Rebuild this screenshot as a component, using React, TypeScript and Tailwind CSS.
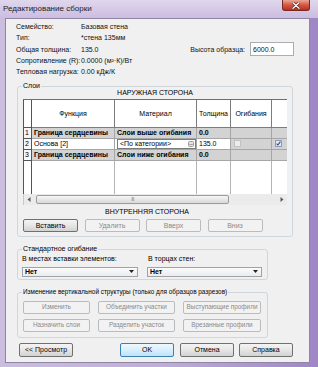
import React from "react";

const btnBase =
  "h-full flex items-center justify-center rounded-[2px] border whitespace-nowrap";
const btnNormal =
  "border-[#707070] bg-gradient-to-b from-[#f4f4f4] via-[#e6e6e6] to-[#d2d2d2] text-black";
const btnDisabled = "border-[#b8bcbf] bg-[#f2f2f2] text-[#8a8a8a]";
const btnDefault =
  "border-[#3c7fb1] bg-gradient-to-b from-[#eef8fe] via-[#d8effc] to-[#bde3f8] text-black";

function GroupBox({
  label,
  labelClass,
  className,
  children,
}: {
  label: string;
  labelClass?: string;
  className: string;
  children: React.ReactNode;
}) {
  return (
    <div className={"relative rounded-[3px] border border-[#d0d7dc] " + className}>
      <span
        className={
          "absolute left-[4px] top-[-5px] bg-[#f0f0f0] px-[1px] leading-[8px] text-black whitespace-nowrap " +
          (labelClass ?? "text-[7px]")
        }
      >
        {label}
      </span>
      {children}
    </div>
  );
}

function Arrow({ dir }: { dir: "l" | "r" }) {
  return (
    <div className="w-[10px] h-full flex items-center justify-center">
      <svg width="4" height="5" viewBox="0 0 4 5">
        {dir === "l" ? (
          <polygon points="3.5,0 3.5,5 0.5,2.5" fill="#5a5a5a" />
        ) : (
          <polygon points="0.5,0 0.5,5 3.5,2.5" fill="#5a5a5a" />
        )}
      </svg>
    </div>
  );
}

const cIdx = "w-[9px] shrink-0 border-l border-r border-b border-[#555] bg-[#f7f7f7] pl-[1px] flex items-center";
const cFunc = "w-[83px] shrink-0 border-r border-b border-[#a6a6a6] pl-[2px] flex items-center whitespace-nowrap";
const cMat = "w-[82px] shrink-0 border-r border-b border-[#a6a6a6] pl-[2px] flex items-center whitespace-nowrap";
const cThk = "w-[34px] shrink-0 border-r border-b border-[#a6a6a6] pl-[2px] flex items-center whitespace-nowrap";
const cOgb = "w-[41px] shrink-0 border-r border-b border-[#a6a6a6] flex items-center";
const cLast = "w-[15px] shrink-0 border-b border-[#a6a6a6] flex items-center";

export default function App() {
  return (
    <div className="w-[318px] h-[367px] overflow-hidden flex flex-col bg-gradient-to-r from-[#cbbde0] via-[#bfaed9] to-[#9f87c6] font-['Liberation_Sans',sans-serif] text-[7px] leading-none text-black">
      {/* Title bar */}
      <div className="h-[18px] shrink-0 flex items-start bg-gradient-to-b from-[#e0d7ec] to-[#cbbde0]">
        <span className="ml-[3px] mt-[5px] text-[8px] text-[#1c1c1c] whitespace-nowrap">
          Редактирование сборки
        </span>
        <div className="ml-auto mr-[8px] w-[28px] h-[11px] rounded-b-[3px] border border-t-0 border-[#7a2a22] bg-gradient-to-b from-[#eaa596] via-[#d45643] to-[#b8301f] flex items-center justify-center">
          <svg width="8" height="7" viewBox="0 0 8 7">
            <path d="M1 0.8 L7 6.2 M7 0.8 L1 6.2" stroke="#5a1a14" strokeWidth="2.6" strokeLinecap="round" />
            <path d="M1 0.8 L7 6.2 M7 0.8 L1 6.2" stroke="#ffffff" strokeWidth="1.4" strokeLinecap="round" />
          </svg>
        </div>
      </div>

      {/* Client */}
      <div className="ml-[5px] mr-[8px] mb-[4px] flex-1 flex flex-col border border-[#8e86a2] bg-[#f0f0f0]">
        {/* Info */}
        <div className="pt-[2px] pl-[10px] pr-[15px] flex flex-col text-[#111]">
          <div className="h-[11.3px] flex items-center">
            <span className="w-[65px] shrink-0 whitespace-nowrap">Семейство:</span>
            <span>Базовая стена</span>
          </div>
          <div className="h-[11.3px] flex items-center">
            <span className="w-[65px] shrink-0 whitespace-nowrap">Тип:</span>
            <span>*стена 135мм</span>
          </div>
          <div className="h-[11.3px] flex items-center">
            <span className="w-[65px] shrink-0 whitespace-nowrap">Общая толщина:</span>
            <span>135.0</span>
            <span className="ml-auto mr-[5px] whitespace-nowrap">Высота образца:</span>
            <div className="w-[44px] h-[14px] shrink-0 border border-[#abadb3] bg-white flex items-center pl-[2px]">
              6000.0
            </div>
          </div>
          <div className="h-[11.3px] flex items-center">
            <span className="w-[65px] shrink-0 whitespace-nowrap">Сопротивление (R):</span>
            <span className="whitespace-nowrap">0.0000 (м²·К)/Вт</span>
          </div>
          <div className="h-[11.3px] flex items-center">
            <span className="w-[65px] shrink-0 whitespace-nowrap">Тепловая нагрузка:</span>
            <span className="whitespace-nowrap">0.00 кДж/К</span>
          </div>
        </div>

        {/* Layers group */}
        <GroupBox label="Слои" className="ml-[11px] mt-[8.5px] w-[276px] h-[151px] flex flex-col">
          <div className="h-[12px] flex items-center justify-center">НАРУЖНАЯ СТОРОНА</div>
          <div className="ml-[5px] w-[264px] flex flex-col bg-white">
            {/* header */}
            <div className="h-[29px] flex border-t border-[#6f6f6f]">
              <div className="w-[9px] shrink-0 border-l border-r border-b border-[#555] bg-white" />
              <div className="w-[83px] shrink-0 border-r border-b border-[#7c7c7c] flex items-center justify-center">Функция</div>
              <div className="w-[82px] shrink-0 border-r border-b border-[#7c7c7c] flex items-center justify-center">Материал</div>
              <div className="w-[34px] shrink-0 border-r border-b border-[#7c7c7c] flex items-center justify-center whitespace-nowrap">Толщина</div>
              <div className="w-[41px] shrink-0 border-r border-b border-[#7c7c7c] flex items-center justify-center">Огибания</div>
              <div className="w-[15px] shrink-0 border-b border-[#7c7c7c]" />
            </div>
            {/* row 1 */}
            <div className="h-[11px] flex font-bold">
              <div className={cIdx + " font-normal"}>1</div>
              <div className={cFunc + " bg-[#d3d3d3]"}>Граница сердцевины</div>
              <div className={cMat + " bg-[#d3d3d3]"}>Слои выше огибания</div>
              <div className={cThk + " bg-[#d3d3d3]"}>0.0</div>
              <div className={cOgb + " bg-[#d3d3d3]"} />
              <div className={cLast + " bg-[#d3d3d3]"} />
            </div>
            {/* row 2 */}
            <div className="h-[11px] flex">
              <div className={cIdx}>2</div>
              <div className={cFunc + " bg-white"}>Основа [2]</div>
              <div className={cMat + " bg-white pl-0"}>
                <div className="w-full h-full border border-[#7a7a7a] flex items-center pl-[2px] pr-[1px]">
                  <span>&lt;По категории&gt;</span>
                  <svg className="ml-auto" width="6" height="6" viewBox="0 0 6 6">
                    <rect x="0.5" y="0.5" width="5" height="5" rx="1" fill="#e4e4e4" stroke="#9a9a9a" />
                    <rect x="1.5" y="3" width="0.8" height="0.8" fill="#666" />
                    <rect x="2.6" y="3" width="0.8" height="0.8" fill="#666" />
                    <rect x="3.7" y="3" width="0.8" height="0.8" fill="#666" />
                  </svg>
                </div>
              </div>
              <div className={cThk + " bg-white"}>135.0</div>
              <div className={cOgb + " bg-[#d3d3d3] pl-[3px]"}>
                <div className="w-[7px] h-[7px] border border-[#c2c2c2] bg-[#ececec]" />
              </div>
              <div className={cLast + " bg-[#d3d3d3] pl-[3px]"}>
                <svg width="7" height="7" viewBox="0 0 7 7">
                  <rect x="0.5" y="0.5" width="6" height="6" fill="#dfe9f5" stroke="#8e9bb0" />
                  <path d="M1.6 3.6 L2.9 5 L5.4 1.6" fill="none" stroke="#2a4c8c" strokeWidth="1.1" />
                </svg>
              </div>
            </div>
            {/* row 3 */}
            <div className="h-[11px] flex font-bold">
              <div className={cIdx + " font-normal"}>3</div>
              <div className={cFunc + " bg-[#d3d3d3]"}>Граница сердцевины</div>
              <div className={cMat + " bg-[#d3d3d3]"}>Слои ниже огибания</div>
              <div className={cThk + " bg-[#d3d3d3]"}>0.0</div>
              <div className={cOgb + " bg-[#d3d3d3]"} />
              <div className={cLast + " bg-[#d3d3d3]"} />
            </div>
            {/* empty */}
            <div className="h-[33px] flex">
              <div className="w-[9px] shrink-0 border-l border-r border-[#555] bg-white" />
              <div className="w-[83px] shrink-0 border-r border-[#b4b4b4]" />
              <div className="w-[82px] shrink-0 border-r border-[#b4b4b4]" />
              <div className="w-[34px] shrink-0 border-r border-[#b4b4b4]" />
              <div className="w-[41px] shrink-0 border-r border-[#b4b4b4]" />
              <div className="w-[15px] shrink-0" />
            </div>
            {/* scrollbar */}
            <div className="h-[11px] flex items-center bg-[#ebebeb] border-l border-[#c8c8c8]">
              <Arrow dir="l" />
              <div className="ml-[2px] w-[193px] h-[9px] rounded-[2px] border border-[#9c9c9c] bg-gradient-to-b from-[#f6f6f6] to-[#d9d9d9] flex items-center justify-center">
                <span className="text-[5px] leading-none text-[#777] tracking-[-0.5px]">III</span>
              </div>
              <div className="flex-1" />
              <Arrow dir="r" />
            </div>
          </div>
          <div className="h-[14px] flex items-center pl-[87px] whitespace-nowrap">ВНУТРЕННЯЯ СТОРОНА</div>
          <div className="h-[13px] ml-[5px] flex gap-[6.5px] text-[7px]">
            <div className={btnBase + " " + btnNormal + " w-[55px]"}>Вставить</div>
            <div className={btnBase + " " + btnDisabled + " w-[55px]"}>Удалить</div>
            <div className={btnBase + " " + btnDisabled + " w-[55px]"}>Вверх</div>
            <div className={btnBase + " " + btnDisabled + " w-[55px]"}>Вниз</div>
          </div>
        </GroupBox>

        {/* Standard wrap group */}
        <GroupBox label="Стандартное огибание" className="ml-[11px] mt-[12px] w-[251px] h-[31px] flex flex-col pt-[4px] pl-[4px]">
          <div className="h-[10px] flex items-center">
            <span className="w-[126px] whitespace-nowrap">В местах вставки элементов:</span>
            <span className="whitespace-nowrap">В торцах стен:</span>
          </div>
          <div className="mt-[3px] h-[10px] flex gap-[9px]">
            <div className="w-[116px] h-full border border-[#9da3aa] bg-gradient-to-b from-[#fbfbfb] to-[#ececec] flex items-center pl-[2px] pr-[3px] font-bold">
              <span>Нет</span>
              <svg className="ml-auto" width="5" height="3" viewBox="0 0 5 3">
                <polygon points="0,0 5,0 2.5,3" fill="#222" />
              </svg>
            </div>
            <div className="w-[115px] h-full border border-[#9da3aa] bg-gradient-to-b from-[#fbfbfb] to-[#ececec] flex items-center pl-[2px] pr-[3px] font-bold">
              <span>Нет</span>
              <svg className="ml-auto" width="5" height="3" viewBox="0 0 5 3">
                <polygon points="0,0 5,0 2.5,3" fill="#222" />
              </svg>
            </div>
          </div>
        </GroupBox>

        {/* Vertical structure group */}
        <GroupBox
          label="Изменение вертикальной структуры (только для образцов разрезов)"
          labelClass="text-[6.4px]"
          className="ml-[11px] mt-[12px] w-[251px] h-[46px] flex flex-col pt-[8px] pl-[5px] gap-[5px]"
        >
          <div className="h-[13px] flex gap-[8px] text-[6.4px]">
            <div className={btnBase + " " + btnDisabled + " w-[67px]"}>Изменить</div>
            <div className={btnBase + " " + btnDisabled + " w-[77px]"}>Объединить участки</div>
            <div className={btnBase + " " + btnDisabled + " w-[78px]"}>Выступающие профили</div>
          </div>
          <div className="h-[13px] flex gap-[8px] text-[6.4px]">
            <div className={btnBase + " " + btnDisabled + " w-[67px]"}>Назначить слои</div>
            <div className={btnBase + " " + btnDisabled + " w-[77px]"}>Разделить участок</div>
            <div className={btnBase + " " + btnDisabled + " w-[78px]"}>Врезанные профили</div>
          </div>
        </GroupBox>

        {/* Bottom buttons */}
        <div className="mt-[5px] h-[14px] flex ml-[13px] text-[7px]">
          <div className={btnBase + " " + btnNormal + " w-[54px]"}>&lt;&lt; Просмотр</div>
          <div className={btnBase + " " + btnDefault + " w-[54px] ml-[47px]"}>OK</div>
          <div className={btnBase + " " + btnNormal + " w-[54px] ml-[6px]"}>Отмена</div>
          <div className={btnBase + " " + btnNormal + " w-[54px] ml-[5px]"}>Справка</div>
        </div>
      </div>
    </div>
  );
}
